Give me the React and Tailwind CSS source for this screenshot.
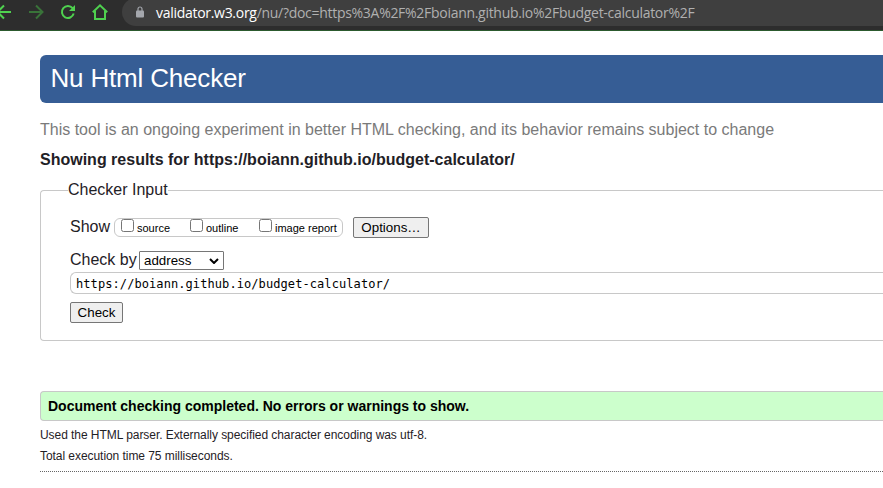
import React from "react";

function Toolbar() {
  return (
    <div className="flex h-[31px] overflow-hidden border-b border-[#2c5a2e] bg-[#2d2d2d] text-[#4fd14f]">
      <svg className="h-[26px] w-[122px] shrink-0" viewBox="0 0 122 26" fill="none" stroke="currentColor" strokeWidth="2">
        <path d="M-2 12H11M4 5.5L-2.5 12L4 18.5" />
        <path d="M29 12H42M36 5.5L42.5 12L36 18.5" stroke="#397339" />
        <path d="M72.6 8.2A6 6 0 1 0 73.7 13.6" />
        <path d="M75 5V11H69Z" fill="currentColor" stroke="none" />
        <path d="M92.8 12.3L100 5.3L107.2 12.3M95 11V19H105V11" />
      </svg>
      <div className="-mt-[2px] flex h-[28px] min-w-0 flex-1 items-center overflow-hidden rounded-l-[14px] bg-[#3f3f3f] pl-[14px]">
        <svg className="h-3 w-2 shrink-0" viewBox="0 0 8 12" fill="none">
          <path d="M2 5V3a2 2 0 0 1 4 0v2" stroke="#a4a7ad" strokeWidth="1.2" />
          <rect y="4.5" width="8" height="7" rx="1" fill="#a4a7ad" />
        </svg>
        <p className="ml-3 mt-[2px] whitespace-nowrap font-['Open_Sans','Noto_Sans',sans-serif] text-[14px] leading-[24px] tracking-[-0.29px] text-[#b0b0b0]">
          <span className="text-white">validator.w3.org</span>/nu/?doc=https%3A%2F%2Fboiann.github.io%2Fbudget-calculator%2F
        </p>
      </div>
    </div>
  );
}

function Option({ children, className }) {
  return (
    <label className={"flex items-start " + className}>
      <span className="h-[13px] w-[13px] rounded-[2.5px] border border-[#767676] bg-white" />
      <span className="ml-[3px] mt-[1px] whitespace-nowrap text-[11px] leading-[17px] text-black">{children}</span>
    </label>
  );
}

function Button({ children, className }) {
  return (
    <button className={"h-[21px] whitespace-nowrap rounded-[2px] border border-[#767676] bg-[#efefef] text-[13.333px] leading-[19px] text-black " + className}>
      {children}
    </button>
  );
}

export default function App() {
  return (
    <div className="h-[488px] w-[883px] overflow-hidden bg-white font-['Liberation_Sans',Arial,sans-serif] text-[16px] text-[#1f2126]">
      <Toolbar />
      <main className="pl-10 pt-6">
        <h1 className="h-12 rounded-l-[6px] bg-[#365d95] pl-[10.5px] text-[26px] leading-[46px] tracking-[-0.18px] text-white">Nu Html Checker</h1>
        <p className="mt-[15px] whitespace-nowrap leading-6 text-[#7a7a7a]">
          This tool is an ongoing experiment in better HTML checking, and its behavior remains subject to change
        </p>
        <h2 className="mt-[6px] whitespace-nowrap font-bold leading-6">
          Showing results for https://boiann.github.io/budget-calculator/
        </h2>
        <fieldset className="mt-[7px] h-[162px] rounded-l-[4px] border border-r-0 border-[#c8c8c8] pl-[29px]">
          <legend className="-ml-[2px] h-[23px] leading-[21px]">Checker Input</legend>
          <div className="mt-[15px] flex h-[21px] items-start">
            <span className="w-11 leading-[19px]">Show</span>
            <div className="mt-[1px] flex h-[19px] w-[229px] rounded-[6px] border border-[#c8c8c8] pl-[6px]">
              <Option className="w-[69px]">source</Option>
              <Option className="w-[69px]">outline</Option>
              <Option className="">image report</Option>
            </div>
            <Button className="ml-[10px] w-[76px]">Options…</Button>
          </div>
          <div className="mt-[13px] flex h-[19px]">
            <span className="w-[69px] whitespace-nowrap leading-[17px]">Check by</span>
            <div className="flex h-[19px] w-[85px] items-center justify-between rounded-[1px] border border-[#767676] pl-1 pr-1 text-[13.333px] leading-[17px] text-black">
              address
              <svg className="h-[6px] w-[10px]" viewBox="0 0 10 6" fill="none" stroke="black" strokeWidth="2">
                <path d="M1 1L5 5L9 1" />
              </svg>
            </div>
          </div>
          <div className="mt-[2px] h-[22px] whitespace-nowrap rounded-l-[6px] border border-r-0 border-[#c8c8c8] pl-[5px] font-['DejaVu_Sans_Mono',monospace] text-[12px] leading-[22px] tracking-[0.08px] text-black">
            https://boiann.github.io/budget-calculator/
          </div>
          <Button className="mt-2 block w-[53px]">Check</Button>
        </fieldset>
        <p className="mt-[50px] h-[30px] rounded-l-[4px] border border-r-0 border-[#c8c8c8] bg-[#ccffcc] pl-[7px] text-[14px] font-bold leading-[28px] text-black">
          Document checking completed. No errors or warnings to show.
        </p>
        <p className="mt-1 text-[12px] leading-5 tracking-[-0.055px]">Used the HTML parser. Externally specified character encoding was utf-8.</p>
        <p className="mt-[1px] h-[26px] border-b border-dotted border-[#666666] text-[12px] leading-5 tracking-[-0.055px]">Total execution time 75 milliseconds.</p>
      </main>
    </div>
  );
}
